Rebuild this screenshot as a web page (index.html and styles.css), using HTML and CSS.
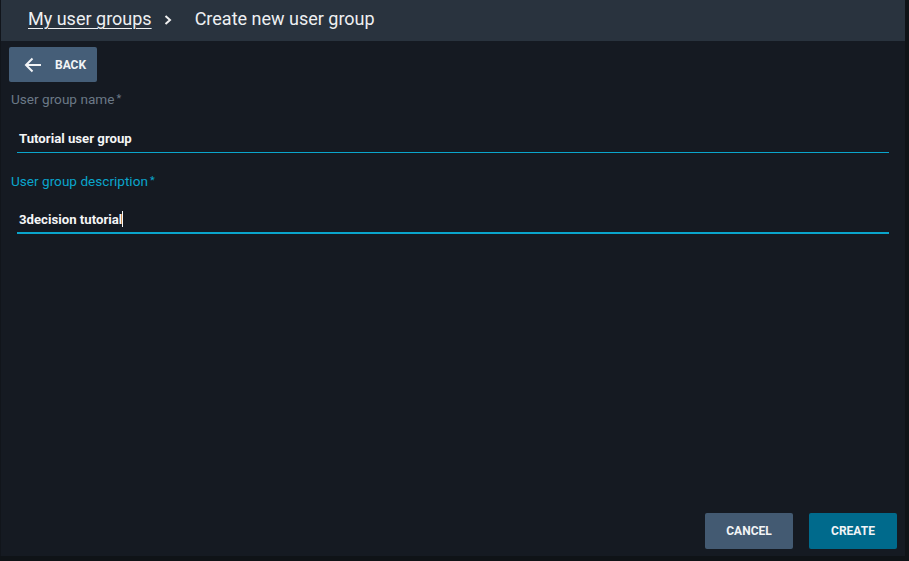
FILE: index.html
```
<!DOCTYPE html>
<html>
<head>
<meta charset="utf-8">
<link rel="stylesheet" href="styles.css">
</head>
<body>
<div class="app">
  <header class="topbar">
    <a class="crumb-link">My user groups</a>
    <svg class="chev" width="10" height="12" viewBox="0 0 10 12"><path d="M2.5 2 L7 6 L2.5 10" fill="none" stroke="#f0f0f0" stroke-width="2"/></svg>
    <span class="crumb-current">Create new user group</span>
  </header>
  <main class="content">
    <button class="btn btn-back">
      <svg width="18" height="16" viewBox="0 0 18 16"><path d="M17 8 H2 M8.5 1.5 L2 8 L8.5 14.5" fill="none" stroke="#f2f4f6" stroke-width="2"/></svg>
      <span>BACK</span>
    </button>
    <div class="field">
      <label class="label">User group name<sup>*</sup></label>
      <div class="input">Tutorial user group</div>
    </div>
    <div class="field focused">
      <label class="label">User group description<sup>*</sup></label>
      <div class="input">3decision tutorial<span class="caret"></span></div>
    </div>
    <div class="spacer"></div>
    <div class="actions">
      <button class="btn btn-cancel">CANCEL</button>
      <button class="btn btn-create">CREATE</button>
    </div>
  </main>
</div>
</body>
</html>
```
FILE: styles.css
```
html, body {
  margin: 0;
  padding: 0;
  background: #0f1317;
  font-family: Roboto, "Liberation Sans", sans-serif;
}
.app {
  width: 905px;
  height: 556px;
  background: #151a22;
  display: flex;
  flex-direction: column;
  border-left: 1px solid #11151b;
  box-sizing: border-box;
}
.topbar {
  height: 41px;
  box-sizing: border-box;
  padding-bottom: 4px;
  background: #29333e;
  display: flex;
  align-items: center;
  padding-left: 27px;
  flex-shrink: 0;
}
.crumb-link {
  color: #eef0f2;
  font-size: 18px;
  text-decoration: underline;
  text-underline-offset: 3px;
  text-decoration-thickness: 1px;
}
.chev {
  margin-left: 11px;
  margin-right: 22px;
  margin-top: 3px;
}
.crumb-current {
  color: #eef0f2;
  font-size: 18px;
}
.content {
  flex: 1;
  display: flex;
  flex-direction: column;
  padding: 6px 16px 7px 8px;
}
.btn {
  border: none;
  border-radius: 2px;
  color: #f2f4f6;
  font-family: Roboto, "Liberation Sans", sans-serif;
  font-weight: bold;
  font-size: 12px;
  height: 36px;
  width: 88px;
  padding: 0;
}
.btn-back {
  display: flex;
  align-items: center;
  background: #455e78;
  padding-left: 15px;
  gap: 13px;
  height: 35px;
}
.field {
  display: flex;
  flex-direction: column;
}
.label {
  color: #6b7987;
  font-size: 13.6px;
  margin-left: 2px;
  margin-top: 9px;
  line-height: 17px;
}
.label sup {
  font-size: 11px;
  vertical-align: top;
  position: relative;
  top: -1px;
  margin-left: 2px;
}
.field.focused .label {
  color: #0aa5cc;
  margin-top: 20px;
}
.input {
  margin-left: 8px;
  margin-top: 23px;
  padding-left: 2px;
  color: #f4f5f6;
  font-weight: bold;
  font-size: 13.2px;
  line-height: 16px;
  height: 16px;
  border-bottom: 1px solid #0aa5cc;
  padding-bottom: 5px;
}
.field.focused .input {
  margin-top: 21px;
  border-bottom: 2px solid #0aa5cc;
  padding-bottom: 5px;
}
.caret {
  display: inline-block;
  width: 1px;
  height: 16px;
  background: #f4f5f6;
  vertical-align: -3px;
}
.spacer {
  flex: 1;
}
.actions {
  display: flex;
  justify-content: flex-end;
  gap: 16px;
  margin-right: -8px;
}
.btn-cancel {
  background: #435a72;
}
.btn-create {
  background: #006a8c;
}
```
